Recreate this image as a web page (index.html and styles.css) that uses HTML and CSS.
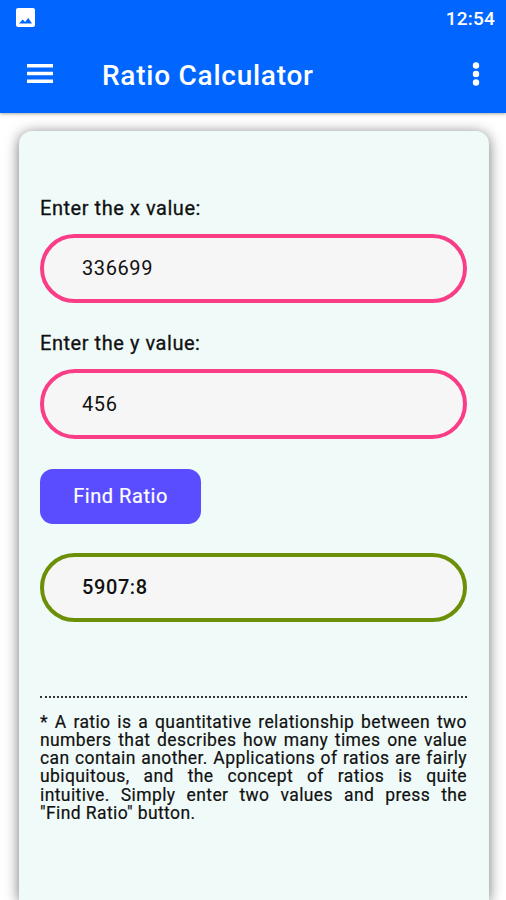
FILE: index.html
```html
<!DOCTYPE html>
<html lang="en">
<head>
<meta charset="utf-8">
<title>Ratio Calculator</title>
<link rel="stylesheet" href="styles.css">
</head>
<body>
<header class="top">
  <div class="status">
    <svg class="pic" viewBox="0 0 19 19"><path fill="#fff" fill-rule="evenodd" d="M2 0h15a2 2 0 0 1 2 2v15a2 2 0 0 1-2 2H2a2 2 0 0 1-2-2V2a2 2 0 0 1 2-2zM3 15.500h13l-3.700-5.500-3.300 4-2.300-2.500z"/></svg>
    <span class="clock">12:54</span>
  </div>
  <div class="bar">
    <svg class="menu" viewBox="0 0 26 20"><path fill="#fff" d="M0 0h26v3.500H0zM0 7.700h26v3.500H0zM0 15.600h26v3.500H0z"/></svg>
    <h1 class="title">Ratio Calculator</h1>
    <svg class="more" viewBox="0 0 8 24"><g fill="#fff"><circle cx="4" cy="3.500" r="3.200"/><circle cx="4" cy="12" r="3.200"/><circle cx="4" cy="20.500" r="3.200"/></g></svg>
  </div>
</header>
<main class="card">
  <div class="label"><span>Enter the x value:</span></div>
  <div class="field"><span>336699</span></div>
  <div class="label second"><span>Enter the y value:</span></div>
  <div class="field"><span>456</span></div>
  <button class="find">Find Ratio</button>
  <div class="field result"><span>5907:8</span></div>
  <div class="note">
    <div>* A ratio is a quantitative relationship between two</div>
    <div>numbers that describes how many times one value</div>
    <div>can contain another. Applications of ratios are fairly</div>
    <div>ubiquitous, and the concept of ratios is quite</div>
    <div>intuitive. Simply enter two values and press the</div>
    <div>"Find Ratio" button.</div>
  </div>
</main>
</body>
</html>
```

FILE: styles.css
```css
* { box-sizing: border-box; }
body { margin: 0; height: 900px; overflow: hidden; background: #fff; font-family: Roboto, sans-serif; color: #111; }
.top { height: 113px; background: #0066ff; color: #fff; box-shadow: 0 1px 3px rgba(0,0,0,.35); }
.status { height: 36px; padding: 0 11px 0 16px; display: flex; align-items: center; justify-content: space-between; }
.pic { width: 19px; height: 19px; margin-top: -2px; }
.clock { font-size: 19px; font-weight: 500; letter-spacing: .2px; }
.bar { height: 77px; padding: 0 26px 0 27px; display: flex; align-items: center; }
.menu { width: 26px; height: 20px; margin-top: -2px; }
.title { margin: 2px auto 0 49px; font-size: 28px; font-weight: 500; letter-spacing: .75px; line-height: 32px; }
.more { width: 8px; height: 24px; margin-top: -2px; }
.card { height: 769px; margin: 18px 17px 0 18.500px; padding: 64.500px 22px 0 21.500px; border-radius: 13px 13px 0 0; background: #f0fbf9; box-shadow: 0 2px 14px rgba(0,0,0,.55); }
.label { height: 24px; margin-bottom: 14px; font-size: 20px; line-height: 24px; letter-spacing: .55px; -webkit-text-stroke: .3px #111; }
.second { margin-top: 28px; }
.field { height: 69.500px; border: 4px solid #fa3d87; border-radius: 35px; background: #f6f6f6; padding: 0 38px; display: flex; align-items: center; font-size: 20px; letter-spacing: .6px; }
.find { display: block; width: 161px; height: 55px; margin: 30px 0 29px; padding: 0; border: 0; border-radius: 13px; background: #5a4dff; color: #fff; font: 400 20px Roboto, sans-serif; letter-spacing: .55px; -webkit-text-stroke: .2px #fff; }
.result { border-color: #6b9008; font-weight: 500; }
.note { margin-top: 74px; padding-top: 14.500px; border-top: 2px dotted #333; font-size: 17.500px; line-height: 18.300px; letter-spacing: .4px; -webkit-text-stroke: .2px #111; }
.note div { text-align: justify; text-align-last: justify; white-space: nowrap; }
.note div:last-child { text-align-last: left; }
```
